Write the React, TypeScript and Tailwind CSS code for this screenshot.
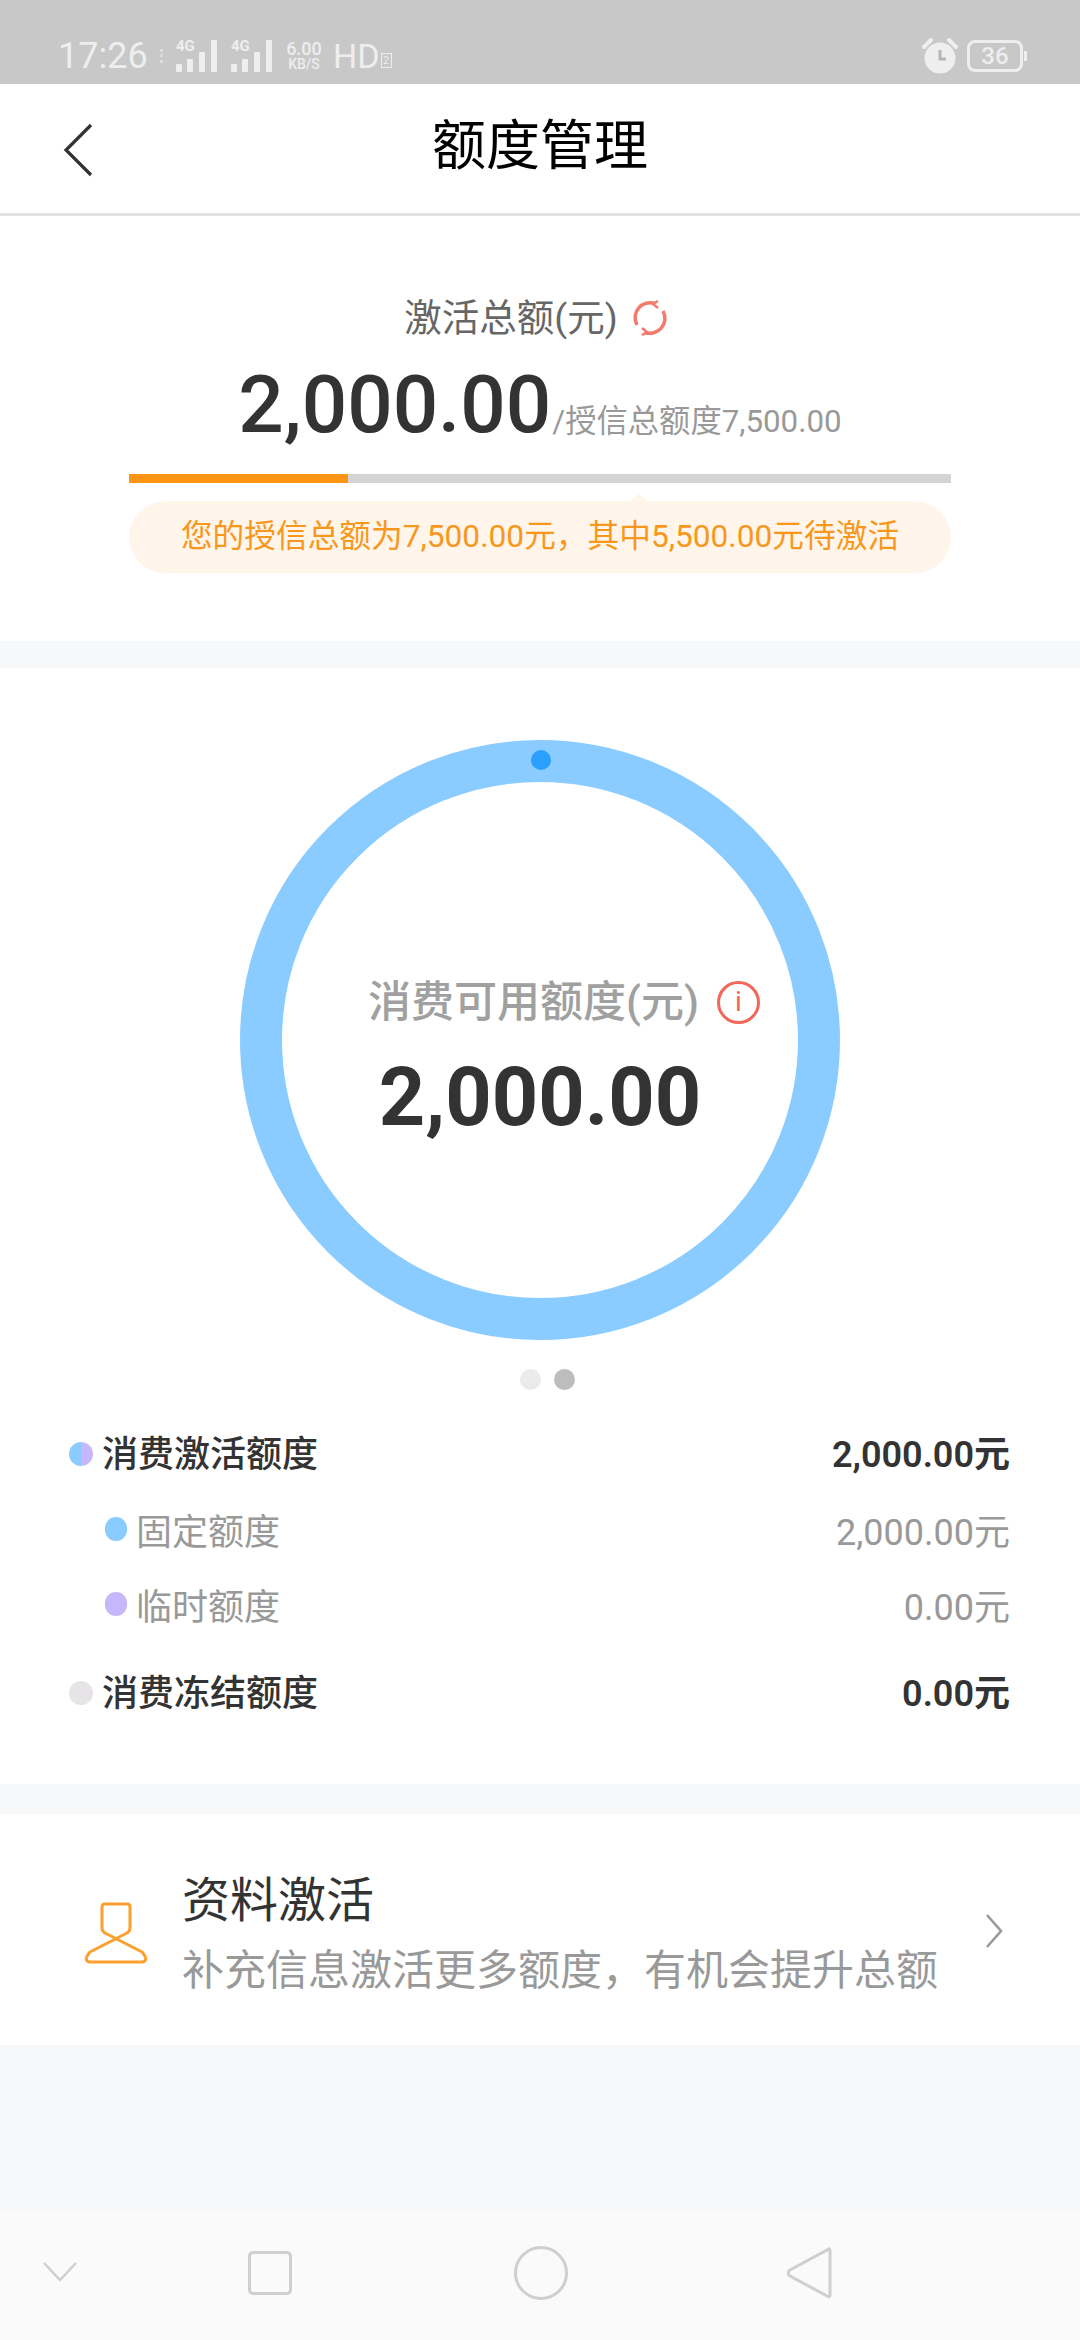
import React from "react";

function Bars() {
  return (
    <div className="flex flex-col items-start w-[42px] h-[32px] relative">
      <span className="text-[15px] leading-[13px] font-bold">4G</span>
      <svg className="absolute left-0 top-0" width="42" height="32" viewBox="0 0 42 32" fill="#eeeeee">
        <rect x="0" y="24" width="6" height="8" rx="1" />
        <rect x="11" y="19" width="6" height="13" rx="1" />
        <rect x="23" y="12" width="6" height="20" rx="1" />
        <rect x="35" y="0" width="6" height="32" rx="1" />
      </svg>
    </div>
  );
}

function Row({ label, value, strong, dot, indent }: { label: string; value: string; strong?: boolean; dot: string; indent?: boolean }) {
  return (
    <div className={`flex items-center justify-between ${indent ? "pl-[36px]" : ""}`}>
      <div className="flex items-center">
        <span className={`rounded-full ${dot} ${indent ? "w-[22px] h-[24px] mr-[9px] -mt-[8px]" : "w-[24px] h-[24px] mr-[9px] -mt-[3px]"}`} />
        <span className={`text-[36px] leading-[50px] ${strong ? "font-medium text-[#333333]" : "text-[#999999]"}`}>{label}</span>
      </div>
      <span className={`text-[36px] leading-[50px] ${strong ? "font-semibold text-[#333333]" : "text-[#999999]"}`}>{value}</span>
    </div>
  );
}

export default function App() {
  return (
    <div className="w-[1080px] h-[2340px] flex flex-col bg-[#f6f8fa] font-[Roboto,'Noto_Sans_CJK_SC',sans-serif] overflow-hidden">
      {/* status bar */}
      <div className="h-[84px] shrink-0 bg-[#c8c8c8] text-[#eeeeee] flex items-center pl-[58px] pr-[57px] pt-[27px]">
        <span className="text-[36px] leading-[36px] w-[102px]">17:26</span>
        <span className="w-[4px] h-[14px] mr-[12px] border-l-[3px] border-dotted border-[#dddddd]" />
        <Bars />
        <span className="w-[13px]" />
        <Bars />
        <div className="flex flex-col ml-[11px] w-[40px] items-center font-medium">
          <span className="text-[18px] leading-[17px]">6.00</span>
          <span className="text-[14px] leading-[15px]">KB/S</span>
        </div>
        <span className="text-[34px] leading-[34px] ml-[9px]">HD</span>
        <span className="ml-[1px] mt-[10px] w-[11px] h-[15px] border border-[#eeeeee] text-[10px] leading-[13px] text-center">2</span>
        <span className="flex-1" />
        <svg width="36" height="36" viewBox="0 0 36 36" className="mr-[9px] -ml-[2px]">
          <circle cx="18" cy="20" r="15.5" fill="#eeeeee" />
          <path d="M2 9 L9 2 M34 9 L27 2" stroke="#eeeeee" strokeWidth="4" strokeLinecap="round" />
          <path d="M18 12 V21 H24" stroke="#b5b5b5" strokeWidth="3" fill="none" />
        </svg>
        <div className="relative w-[56px] h-[32px] border-[3px] border-[#eeeeee] rounded-[8px] text-[24px] leading-[26px] text-center font-medium">
          36
          <span className="absolute -right-[7px] top-[8px] w-[3px] h-[10px] bg-[#eeeeee]" />
        </div>
      </div>

      {/* header */}
      <div className="relative h-[132px] shrink-0 bg-white border-b-[3px] border-[#e2e2e2] flex items-center justify-center">
        <svg className="absolute left-[63px] top-[39px]" width="30" height="54" viewBox="0 0 30 54" fill="none">
          <path d="M28 2 L3 27 L28 52" stroke="#333333" strokeWidth="3.2" />
        </svg>
        <span className="text-[54px] leading-[60px] text-black -mt-[4px]">额度管理</span>
      </div>

      {/* summary */}
      <div className="h-[425px] shrink-0 bg-white px-[129px] pt-[77px] flex flex-col">
        <div className="flex items-center justify-center h-[50px] text-[37.5px] text-[#666666] pr-[8px]">
          <span>激活总额(元)</span>
          <svg className="ml-[14px]" width="36" height="36" viewBox="0 0 36 36" fill="none" stroke="#f47a6c" strokeWidth="3.5">
            <path d="M5 25 A15 15 0 0 1 23 3.5" />
            <path d="M31 11 A15 15 0 0 1 13 32.5" />
            <path d="M26 1 L21 4 L26 8" strokeWidth="2.5" />
            <path d="M10 35 L15 32 L10 28" strokeWidth="2.5" />
          </svg>
        </div>
        <div className="flex items-baseline justify-center mt-[19px] h-[86px]">
          <span className="text-[80px] leading-[86px] font-medium text-[#333333]">2,000.00</span>
          <span className="text-[31.3px] text-[#999999] ml-[1px]">/授信总额度7,500.00</span>
        </div>
        <div className="h-[9px] mt-[26px] bg-[#d4d4d4] flex shrink-0">
          <div className="w-[219px] bg-[#fb9513]" />
        </div>
        <div className="relative mt-[18px] h-[72px] rounded-full bg-[#fff5ea] flex items-center justify-center text-[31.7px] text-[#f7981c]">
          <span className="absolute left-[501px] -top-[7px] w-0 h-0 border-x-[9px] border-x-transparent border-b-[7px] border-b-[#fff5ea]" />
          您的授信总额为7,500.00元，其中5,500.00元待激活
        </div>
      </div>

      <div className="h-[27px] shrink-0" />

      {/* detail */}
      <div className="h-[1116px] shrink-0 bg-white pt-[72px] flex flex-col">
        <div className="relative self-center w-[600px] h-[600px] rounded-full border-[42px] border-[#8accff] flex flex-col items-center">
          <span className="absolute left-[249px] -top-[32px] w-[20px] h-[20px] rounded-full bg-[#2a9fff]" />
          <div className="flex items-center mt-[192px] h-[56px] ml-[48px]">
            <span className="text-[43px] font-medium text-[#a0a0a0] whitespace-nowrap">消费可用额度(元)</span>
            <span className="ml-[18px] w-[43px] h-[43px] rounded-full border-[3px] border-[#f2675a] flex items-center justify-center text-[#f2675a] text-[28px] leading-none">i</span>
          </div>
          <span className="text-[81px] leading-[90px] mt-[23px] font-bold text-[#333333]">2,000.00</span>
        </div>
        <div className="flex justify-center gap-[13px] mt-[29px] pl-[15px]">
          <span className="w-[21px] h-[21px] rounded-full bg-[#ebebeb]" />
          <span className="w-[21px] h-[21px] rounded-full bg-[#bdbdbd]" />
        </div>
        <div className="flex flex-col pl-[69px] pr-[70px] mt-[40px]">
          <Row label="消费激活额度" value="2,000.00元" strong dot="bg-[linear-gradient(90deg,#8accff_50%,#c6b6fb_50%)]" />
          <div className="h-[28px]" />
          <Row label="固定额度" value="2,000.00元" dot="bg-[#8accff]" indent />
          <div className="h-[25px]" />
          <Row label="临时额度" value="0.00元" dot="bg-[#c6b6fb]" indent />
          <div className="h-[36px]" />
          <Row label="消费冻结额度" value="0.00元" strong dot="bg-[#e6e4e6]" />
        </div>
      </div>

      <div className="h-[30px] shrink-0" />

      {/* activate */}
      <div className="h-[231px] shrink-0 bg-white flex items-center pl-[84px] pr-[77px]">
        <svg width="64" height="62" viewBox="0 0 64 62" fill="none" stroke="#f9a02e" strokeWidth="3" strokeLinejoin="round" className="mt-[7px]">
          <path d="M21 2 H43 Q46 2 46 5 V26 Q46 29 43 31 L6 50 Q-1 58 5 60 H59 Q65 58 58 50 L21 31 Q18 29 18 26 V5 Q18 2 21 2 Z" />
        </svg>
        <div className="flex flex-col ml-[34px]">
          <span className="text-[48px] leading-[60px] text-[#333333] mt-[8px]">资料激活</span>
          <span className="text-[42px] leading-[52px] text-[#999999] mt-[14px] whitespace-nowrap">补充信息激活更多额度，有机会提升总额</span>
        </div>
        <span className="flex-1" />
        <svg width="18" height="34" viewBox="0 0 18 34" fill="none" stroke="#999999" strokeWidth="2.6" className="mt-[2px]">
          <path d="M2 1 L16 17 L2 33" />
        </svg>
      </div>

      <div className="flex-1" />

      {/* nav */}
      <div className="h-[130px] shrink-0 bg-[#fafafa] relative flex items-center">
        <svg width="34" height="20" viewBox="0 0 34 20" fill="none" stroke="#cfcfcf" strokeWidth="2.5" className="ml-[43px] -mt-[6px]">
          <path d="M1 1 L17 18 L33 1" />
        </svg>
        <div className="ml-[171px] w-[44px] h-[44px] rounded-[5px] border-[3px] border-[#cfcfcf] -mt-[4px]" />
        <div className="ml-[222px] w-[54px] h-[54px] rounded-full border-[3px] border-[#cfcfcf] -mt-[4px]" />
        <svg width="46" height="52" viewBox="0 0 46 52" fill="none" stroke="#cfcfcf" strokeWidth="3" className="ml-[219px] -mt-[4px]">
          <path d="M43 4 Q43 0 40 3 L3 23 Q-1 26 3 29 L40 49 Q43 51 43 48 Z" />
        </svg>
      </div>
    </div>
  );
}
